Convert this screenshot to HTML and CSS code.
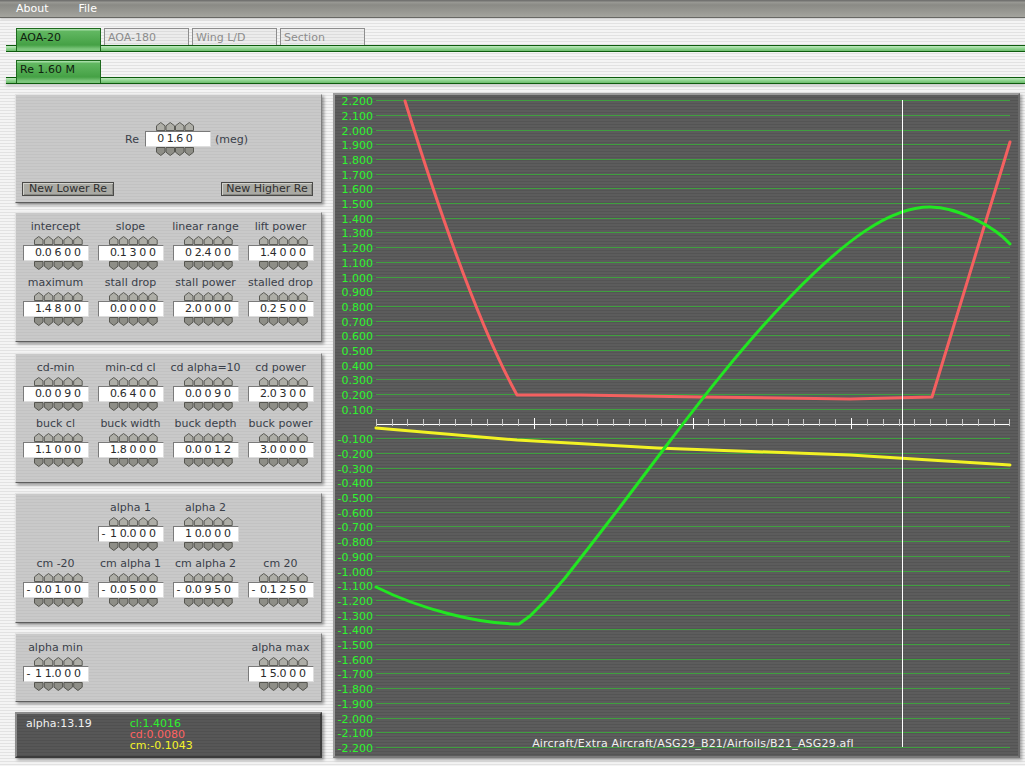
FILE: index.html
```html
<!DOCTYPE html>
<html>
<head>
<meta charset="utf-8">
<title>Airfoil</title>
<link rel="stylesheet" href="styles.css">
</head>
<body>
<svg class="defs" width="0" height="0" aria-hidden="true">
  <defs>
    <path id="ua" d="M0.5 8.5V3.8L4.75 0.5L9 3.8V8.5Z" fill="#aeaea7" stroke="#5a5a55" stroke-width="1" stroke-linejoin="miter"/>
    <path id="da" d="M0.5 0.5H9V5.2L4.75 8.5L0.5 5.2Z" fill="#8e8e87" stroke="#55554f" stroke-width="1" stroke-linejoin="miter"/>
    <symbol id="u5" viewBox="0 0 66 9"><use href="#ua" x="11"/><use href="#ua" x="20.8"/><use href="#ua" x="30.6"/><use href="#ua" x="40.4"/><use href="#ua" x="50.2"/></symbol>
    <symbol id="d5" viewBox="0 0 66 9"><use href="#da" x="11"/><use href="#da" x="20.8"/><use href="#da" x="30.6"/><use href="#da" x="40.4"/><use href="#da" x="50.2"/></symbol>
    <symbol id="u4" viewBox="0 0 56 9"><use href="#ua" x="11"/><use href="#ua" x="20.5"/><use href="#ua" x="30"/><use href="#ua" x="39.5"/></symbol>
    <symbol id="d4" viewBox="0 0 56 9"><use href="#da" x="11"/><use href="#da" x="20.5"/><use href="#da" x="30"/><use href="#da" x="39.5"/></symbol>
  </defs>
</svg>

<div class="menubar"><span>About</span><span>File</span></div>

<div class="tabrow">
  <div class="tab on">AOA-20</div>
  <div class="tab">AOA-180</div>
  <div class="tab">Wing L/D</div>
  <div class="tab">Section</div>
</div>
<div class="bar"></div>

<div class="tabrow second">
  <div class="tab on">Re 1.60 M</div>
</div>
<div class="bar bar2"></div>

<div class="main">
  <div class="left">
    <div class="panel p1">
      <div class="re-row">
        <span class="re-lbl">Re</span>
        <div class="spin4">
          <svg class="ar4"><use href="#u4"/></svg>
          <div class="box box4"><span class="s"></span><b>0</b><b>1</b><i>.</i><b>6</b><b>0</b></div>
          <svg class="ar4"><use href="#d4"/></svg>
        </div>
        <span class="re-unit">(meg)</span>
      </div>
      <div class="btn-row">
        <div class="btn">New Lower Re</div>
        <div class="btn">New Higher Re</div>
      </div>
    </div>

    <div class="panel p2">
      <div class="grid">
        <div class="fld"><div class="lbl">intercept</div><svg class="ar"><use href="#u5"/></svg><div class="box"><span class="s"></span><b>0</b><i>.</i><b>0</b><b>6</b><b>0</b><b>0</b></div><svg class="ar"><use href="#d5"/></svg></div>
        <div class="fld"><div class="lbl">slope</div><svg class="ar"><use href="#u5"/></svg><div class="box"><span class="s"></span><b>0</b><i>.</i><b>1</b><b>3</b><b>0</b><b>0</b></div><svg class="ar"><use href="#d5"/></svg></div>
        <div class="fld"><div class="lbl">linear range</div><svg class="ar"><use href="#u5"/></svg><div class="box"><span class="s"></span><b>0</b><b>2</b><i>.</i><b>4</b><b>0</b><b>0</b></div><svg class="ar"><use href="#d5"/></svg></div>
        <div class="fld"><div class="lbl">lift power</div><svg class="ar"><use href="#u5"/></svg><div class="box"><span class="s"></span><b>1</b><i>.</i><b>4</b><b>0</b><b>0</b><b>0</b></div><svg class="ar"><use href="#d5"/></svg></div>
        <div class="fld"><div class="lbl">maximum</div><svg class="ar"><use href="#u5"/></svg><div class="box"><span class="s"></span><b>1</b><i>.</i><b>4</b><b>8</b><b>0</b><b>0</b></div><svg class="ar"><use href="#d5"/></svg></div>
        <div class="fld"><div class="lbl">stall drop</div><svg class="ar"><use href="#u5"/></svg><div class="box"><span class="s"></span><b>0</b><i>.</i><b>0</b><b>0</b><b>0</b><b>0</b></div><svg class="ar"><use href="#d5"/></svg></div>
        <div class="fld"><div class="lbl">stall power</div><svg class="ar"><use href="#u5"/></svg><div class="box"><span class="s"></span><b>2</b><i>.</i><b>0</b><b>0</b><b>0</b><b>0</b></div><svg class="ar"><use href="#d5"/></svg></div>
        <div class="fld"><div class="lbl">stalled drop</div><svg class="ar"><use href="#u5"/></svg><div class="box"><span class="s"></span><b>0</b><i>.</i><b>2</b><b>5</b><b>0</b><b>0</b></div><svg class="ar"><use href="#d5"/></svg></div>
      </div>
    </div>

    <div class="panel p3">
      <div class="grid">
        <div class="fld"><div class="lbl">cd-min</div><svg class="ar"><use href="#u5"/></svg><div class="box"><span class="s"></span><b>0</b><i>.</i><b>0</b><b>0</b><b>9</b><b>0</b></div><svg class="ar"><use href="#d5"/></svg></div>
        <div class="fld"><div class="lbl">min-cd cl</div><svg class="ar"><use href="#u5"/></svg><div class="box"><span class="s"></span><b>0</b><i>.</i><b>6</b><b>4</b><b>0</b><b>0</b></div><svg class="ar"><use href="#d5"/></svg></div>
        <div class="fld"><div class="lbl">cd alpha=10</div><svg class="ar"><use href="#u5"/></svg><div class="box"><span class="s"></span><b>0</b><i>.</i><b>0</b><b>0</b><b>9</b><b>0</b></div><svg class="ar"><use href="#d5"/></svg></div>
        <div class="fld"><div class="lbl">cd power</div><svg class="ar"><use href="#u5"/></svg><div class="box"><span class="s"></span><b>2</b><i>.</i><b>0</b><b>3</b><b>0</b><b>0</b></div><svg class="ar"><use href="#d5"/></svg></div>
        <div class="fld"><div class="lbl">buck cl</div><svg class="ar"><use href="#u5"/></svg><div class="box"><span class="s"></span><b>1</b><i>.</i><b>1</b><b>0</b><b>0</b><b>0</b></div><svg class="ar"><use href="#d5"/></svg></div>
        <div class="fld"><div class="lbl">buck width</div><svg class="ar"><use href="#u5"/></svg><div class="box"><span class="s"></span><b>1</b><i>.</i><b>8</b><b>0</b><b>0</b><b>0</b></div><svg class="ar"><use href="#d5"/></svg></div>
        <div class="fld"><div class="lbl">buck depth</div><svg class="ar"><use href="#u5"/></svg><div class="box"><span class="s"></span><b>0</b><i>.</i><b>0</b><b>0</b><b>1</b><b>2</b></div><svg class="ar"><use href="#d5"/></svg></div>
        <div class="fld"><div class="lbl">buck power</div><svg class="ar"><use href="#u5"/></svg><div class="box"><span class="s"></span><b>3</b><i>.</i><b>0</b><b>0</b><b>0</b><b>0</b></div><svg class="ar"><use href="#d5"/></svg></div>
      </div>
    </div>

    <div class="panel p4">
      <div class="grid">
        <div class="fld empty"></div>
        <div class="fld"><div class="lbl">alpha 1</div><svg class="ar"><use href="#u5"/></svg><div class="box"><span class="s">-</span><b>1</b><b>0</b><i>.</i><b>0</b><b>0</b><b>0</b></div><svg class="ar"><use href="#d5"/></svg></div>
        <div class="fld"><div class="lbl">alpha 2</div><svg class="ar"><use href="#u5"/></svg><div class="box"><span class="s"></span><b>1</b><b>0</b><i>.</i><b>0</b><b>0</b><b>0</b></div><svg class="ar"><use href="#d5"/></svg></div>
        <div class="fld empty"></div>
        <div class="fld"><div class="lbl">cm -20</div><svg class="ar"><use href="#u5"/></svg><div class="box"><span class="s">-</span><b>0</b><i>.</i><b>0</b><b>1</b><b>0</b><b>0</b></div><svg class="ar"><use href="#d5"/></svg></div>
        <div class="fld"><div class="lbl">cm alpha 1</div><svg class="ar"><use href="#u5"/></svg><div class="box"><span class="s">-</span><b>0</b><i>.</i><b>0</b><b>5</b><b>0</b><b>0</b></div><svg class="ar"><use href="#d5"/></svg></div>
        <div class="fld"><div class="lbl">cm alpha 2</div><svg class="ar"><use href="#u5"/></svg><div class="box"><span class="s">-</span><b>0</b><i>.</i><b>0</b><b>9</b><b>5</b><b>0</b></div><svg class="ar"><use href="#d5"/></svg></div>
        <div class="fld"><div class="lbl">cm 20</div><svg class="ar"><use href="#u5"/></svg><div class="box"><span class="s">-</span><b>0</b><i>.</i><b>1</b><b>2</b><b>5</b><b>0</b></div><svg class="ar"><use href="#d5"/></svg></div>
      </div>
    </div>

    <div class="panel p5">
      <div class="grid">
        <div class="fld"><div class="lbl">alpha min</div><svg class="ar"><use href="#u5"/></svg><div class="box"><span class="s">-</span><b>1</b><b>1</b><i>.</i><b>0</b><b>0</b><b>0</b></div><svg class="ar"><use href="#d5"/></svg></div>
        <div class="fld empty"></div>
        <div class="fld empty"></div>
        <div class="fld"><div class="lbl">alpha max</div><svg class="ar"><use href="#u5"/></svg><div class="box"><span class="s"></span><b>1</b><b>5</b><i>.</i><b>0</b><b>0</b><b>0</b></div><svg class="ar"><use href="#d5"/></svg></div>
      </div>
    </div>

    <div class="status">
      <div class="st-alpha">alpha:13.19</div>
      <div class="st-vals">
        <div class="cl">cl:1.4016</div>
        <div class="cd">cd:0.0080</div>
        <div class="cm">cm:-0.1043</div>
      </div>
    </div>
  </div>

  <div class="graph">
    <svg class="plot" viewBox="335 95 683 661" width="683" height="661">
      <path class="grid-l" d="M376 100.5H1010M376 115.5H1010M376 130.5H1010M376 144.5H1010M376 159.5H1010M376 174.5H1010M376 188.5H1010M376 203.5H1010M376 218.5H1010M376 232.5H1010M376 247.5H1010M376 262.5H1010M376 277.5H1010M376 291.5H1010M376 306.5H1010M376 321.5H1010M376 335.5H1010M376 350.5H1010M376 365.5H1010M376 379.5H1010M376 394.5H1010M376 409.5H1010M376 438.5H1010M376 453.5H1010M376 468.5H1010M376 482.5H1010M376 497.5H1010M376 512.5H1010M376 526.5H1010M376 541.5H1010M376 556.5H1010M376 571.5H1010M376 585.5H1010M376 600.5H1010M376 615.5H1010M376 629.5H1010M376 644.5H1010M376 659.5H1010M376 673.5H1010M376 688.5H1010M376 703.5H1010M376 718.5H1010M376 732.5H1010M376 747.5H1010"/>
      <g class="ylab">
        <text x="373" y="105">2.200</text>
        <text x="373" y="120">2.100</text>
        <text x="373" y="135">2.000</text>
        <text x="373" y="149">1.900</text>
        <text x="373" y="164">1.800</text>
        <text x="373" y="179">1.700</text>
        <text x="373" y="193">1.600</text>
        <text x="373" y="208">1.500</text>
        <text x="373" y="223">1.400</text>
        <text x="373" y="237">1.300</text>
        <text x="373" y="252">1.200</text>
        <text x="373" y="267">1.100</text>
        <text x="373" y="282">1.000</text>
        <text x="373" y="296">0.900</text>
        <text x="373" y="311">0.800</text>
        <text x="373" y="326">0.700</text>
        <text x="373" y="340">0.600</text>
        <text x="373" y="355">0.500</text>
        <text x="373" y="370">0.400</text>
        <text x="373" y="384">0.300</text>
        <text x="373" y="399">0.200</text>
        <text x="373" y="414">0.100</text>
        <text x="373" y="443">-0.100</text>
        <text x="373" y="458">-0.200</text>
        <text x="373" y="473">-0.300</text>
        <text x="373" y="487">-0.400</text>
        <text x="373" y="502">-0.500</text>
        <text x="373" y="517">-0.600</text>
        <text x="373" y="531">-0.700</text>
        <text x="373" y="546">-0.800</text>
        <text x="373" y="561">-0.900</text>
        <text x="373" y="576">-1.000</text>
        <text x="373" y="590">-1.100</text>
        <text x="373" y="605">-1.200</text>
        <text x="373" y="620">-1.300</text>
        <text x="373" y="634">-1.400</text>
        <text x="373" y="649">-1.500</text>
        <text x="373" y="664">-1.600</text>
        <text x="373" y="678">-1.700</text>
        <text x="373" y="693">-1.800</text>
        <text x="373" y="708">-1.900</text>
        <text x="373" y="723">-2.000</text>
        <text x="373" y="737">-2.100</text>
        <text x="373" y="752">-2.200</text>
      </g>
      <path class="axis" d="M376 424.5H1010"/>
      <path class="tick" d="M376.5 419V426M392.5 419V426M407.5 419V426M423.5 419V426M439.5 419V426M455.5 419V426M471.5 419V426M487.5 419V426M502.5 419V426M518.5 419V426M550.5 419V426M566.5 419V426M582.5 419V426M597.5 419V426M613.5 419V426M629.5 419V426M645.5 419V426M661.5 419V426M677.5 419V426M708.5 419V426M724.5 419V426M740.5 419V426M756.5 419V426M772.5 419V426M788.5 419V426M803.5 419V426M819.5 419V426M835.5 419V426M867.5 419V426M883.5 419V426M899.5 419V426M914.5 419V426M930.5 419V426M946.5 419V426M962.5 419V426M978.5 419V426M994.5 419V426M1009.5 419V426"/>
      <path class="tick-big" d="M534.5 418V429M693.5 418V429M851.5 418V429"/>
      <polyline class="c-cm" points="376,428 517,440 657,448 850,455 930,460 1010,465"/>
      <path class="c-cd" d="M405 101Q469 308 517 395L580 395L700 397L850 399L932 397L1010 142"/>
      <path class="c-cl" d="M376 587C420 609 478 624 519 624L530 616L545 601L565 578L590 546L620 507L657 458C680 428 735 353 790 297C845 240 890 207 930 207C958 207 995 227 1010 244"/>
      <path class="cursor" d="M902.5 100V747"/>
      <text class="fname" x="693" y="747">Aircraft/Extra Aircraft/ASG29_B21/Airfoils/B21_ASG29.afl</text>
    </svg>
  </div>
</div>
</body>
</html>
```

FILE: styles.css
```css
* { box-sizing: border-box; }
html, body { margin: 0; padding: 0; }
body {
  width: 1025px;
  height: 766px;
  overflow: hidden;
  font-family: "DejaVu Sans", sans-serif;
  font-size: 11px;
  color: #3a3f49;
  background: repeating-linear-gradient(to bottom, #f4f4f4 0, #f4f4f4 2px, #e2e2e2 2px, #e2e2e2 3px);
}
.defs { position: absolute; width: 0; height: 0; overflow: hidden; }

.menubar {
  height: 18px;
  display: flex;
  align-items: center;
  gap: 30px;
  padding: 0 0 1px 16px;
  color: #fff;
  background: linear-gradient(to bottom, #727270 0, #727270 1px, #9a9a95 2px, #8a8a85 5px, #a4a49e 17px);
  border-bottom: 1px solid #686864;
  box-shadow: 0 1px 2px rgba(0,0,0,0.2);
}

.tabrow { display: flex; gap: 3px; height: 17px; padding-left: 16px; margin-top: 10px; }
.tabrow.second { margin-top: 8px; }
.tab {
  width: 85px;
  height: 17px;
  padding: 3px 0 0 3px;
  line-height: 12px;
  border: 1px solid #8e8e8e;
  border-bottom: 0;
  color: #8c8c8c;
  background: repeating-linear-gradient(to bottom, #ececec 0, #ececec 2px, #dcdcdc 2px, #dcdcdc 3px);
}
.tab.on {
  position: relative;
  z-index: 1;
  height: 23px;
  color: #10200f;
  border-color: #1e6a1e;
  background: linear-gradient(to bottom, #a6dca6 0, #a6dca6 1px, #62b862 2px, #45a145 16px, #7cc67c 20px);
}
.bar {
  height: 7px;
  margin-left: 6px;
  border-top: 1px solid #0d5a0d;
  border-bottom: 1px solid #0d5a0d;
  background: linear-gradient(to bottom, #bfe8bf, #8fd48f 50%, #6cbc6c);
}
.bar2 { box-shadow: 0 2px 3px rgba(0,0,0,0.18); }

.main { display: flex; margin-top: 9px; padding-left: 15px; }
.left { width: 307px; display: flex; flex-direction: column; padding-top: 1px; }

.panel {
  background: repeating-linear-gradient(to bottom, #c9c9c9 0, #c9c9c9 2px, #c2c2c2 2px, #c2c2c2 3px);
  border: 1px solid;
  border-color: #e4e4e4 #808080 #5e5e5e #e2e2e2;
  box-shadow: 2px 2px 3px rgba(0,0,0,0.4);
}
.p1 { height: 109px; margin-bottom: 9px; }
.p2 { height: 130px; margin-bottom: 11px; }
.p3 { height: 130px; margin-bottom: 10px; }
.p4 { height: 130px; margin-bottom: 10px; }
.p5 { height: 69px; margin-bottom: 10px; }

.re-row { display: flex; align-items: center; padding: 27px 0 0 109px; }
.re-lbl { width: 20px; }
.re-unit { margin-left: 4px; }
.spin4 { display: flex; flex-direction: column; }
.ar4 { display: block; width: 56px; height: 9px; }
.box4 { width: 56px; }
.btn-row { display: flex; justify-content: space-between; padding: 0 8px 0 6px; margin-top: 26px; }
.btn {
  width: 92px;
  height: 14px;
  line-height: 12px;
  text-align: center;
  color: #2e2e2e;
  background: #aaaaa4;
  border: 1px solid #4a4a48;
  box-shadow: inset 1px 1px 0 #d2d2cc, inset -1px -1px 0 #8a8a85;
  white-space: nowrap;
}

.grid { display: grid; grid-template-columns: repeat(4, 75px); row-gap: 6px; padding: 7px 0 0 2px; }
.fld { display: flex; flex-direction: column; align-items: center; }
.lbl { height: 13px; line-height: 13px; margin-bottom: 3px; white-space: nowrap; }
.ar { display: block; width: 66px; height: 9px; }
.box {
  display: block;
  width: 66px;
  height: 16px;
  white-space: nowrap;
  background: #fff;
  border: 1px solid;
  border-color: #7a7a7a #dedede #dedede #7a7a7a;
  font-size: 11px;
  line-height: 14px;
  color: #2a2a2a;
}
.box .s { display: inline-block; width: 10px; text-align: center; vertical-align: top; }
.box b { display: inline-block; width: 9.8px; text-align: center; font-weight: normal; vertical-align: top; }
.box4 b { width: 9.5px; }
.box i { display: inline-block; width: 0; margin-left: -1.8px; margin-right: 1.8px; font-style: normal; vertical-align: top; }

.status {
  height: 46px;
  display: flex;
  padding: 4px 0 0 9px;
  line-height: 11px;
  color: #f0f0f0;
  background: repeating-linear-gradient(to bottom, #575757 0, #575757 2px, #505050 2px, #505050 3px);
  border: 2px solid;
  border-color: #8c8c8c #3c3c3c #3c3c3c #8c8c8c;
  box-shadow: 2px 2px 3px rgba(0,0,0,0.4);
}
.st-vals { margin-left: 38px; }
.cl { color: #2ef02e; }
.cd { color: #ff6262; }
.cm { color: #f4f428; }

.graph {
  margin-left: 11px;
  width: 687px;
  height: 665px;
  border: 2px solid;
  border-color: #9c9c9c #6a6a6a #7a7a7a #9c9c9c;
  background: repeating-linear-gradient(to bottom, #5c5c5c 0, #5c5c5c 2px, #545454 2px, #545454 3px);
  box-shadow: 2px 2px 3px rgba(0,0,0,0.35);
}
.plot { display: block; }
.grid-l { stroke: #3f9f3f; stroke-width: 1; fill: none; }
.ylab text { font-family: "DejaVu Sans", sans-serif; font-size: 11px; fill: #2ef52e; text-anchor: end; }
.axis { stroke: #fff; stroke-width: 1; fill: none; }
.tick { stroke: #c8c8c8; stroke-width: 1; fill: none; }
.tick-big { stroke: #fff; stroke-width: 1; fill: none; }
.c-cl, .c-cd, .c-cm { fill: none; stroke-width: 3; stroke-linejoin: round; stroke-linecap: round; }
.c-cl { stroke: #22e622; }
.c-cd { stroke: #f46060; }
.c-cm { stroke: #f2f224; }
.cursor { stroke: #fff; stroke-width: 1; fill: none; }
.fname { font-family: "DejaVu Sans", sans-serif; font-size: 11px; letter-spacing: 0.2px; fill: #f0f0f0; text-anchor: middle; }
```
